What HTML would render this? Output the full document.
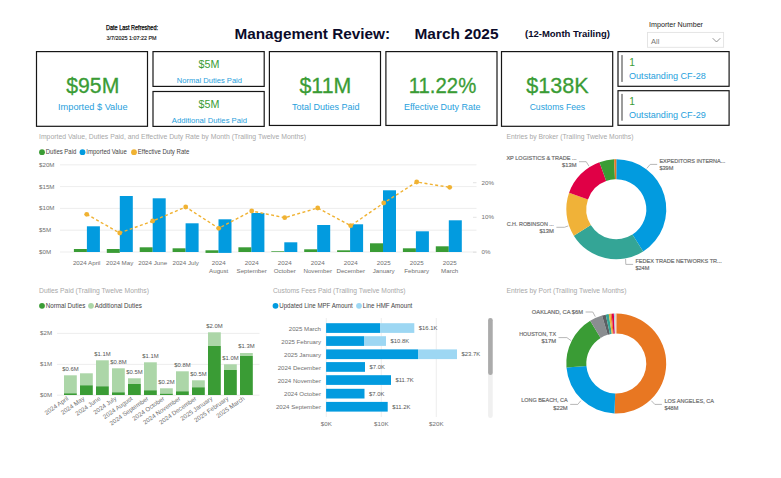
<!DOCTYPE html>
<html><head><meta charset="utf-8"><title>Management Review</title>
<style>html,body{margin:0;padding:0;background:#fff}svg{display:block;font-family:"Liberation Sans", sans-serif}</style>
</head><body>
<svg width="781" height="478" viewBox="0 0 781 478">
<text x="132" y="30" font-size="7" fill="#000" text-anchor="middle" textLength="52" lengthAdjust="spacingAndGlyphs" stroke="#000" stroke-width="0.25">Date Last Refreshed:</text>
<text x="131.6" y="40.1" font-size="6.2" fill="#111" text-anchor="middle" textLength="50" lengthAdjust="spacingAndGlyphs" stroke="#111" stroke-width="0.15">3/7/2025 1:07:22 PM</text>
<text x="234.5" y="38.8" font-size="14.7" fill="#0b0b2a" font-weight="bold" textLength="155.5" lengthAdjust="spacingAndGlyphs">Management Review:</text>
<text x="414.5" y="38.8" font-size="14.7" fill="#0b0b2a" font-weight="bold" textLength="84" lengthAdjust="spacingAndGlyphs">March 2025</text>
<text x="525" y="37" font-size="9.2" fill="#0b0b2a" font-weight="bold" textLength="85" lengthAdjust="spacingAndGlyphs">(12-Month Trailing)</text>
<text x="649" y="26.9" font-size="7.2" fill="#222" textLength="54" lengthAdjust="spacingAndGlyphs">Importer Number</text>
<rect x="647.5" y="32.4" width="76.1" height="14.9" fill="#fff" stroke="#e2e2e2" stroke-width="0.9"/>
<text x="651" y="44" font-size="7.6" fill="#777">All</text>
<path d="M712.7 38.2 L716.5 42 L720.3 38.2" fill="none" stroke="#777" stroke-width="0.8"/>
<rect x="36.5" y="51.6" width="111.00" height="74.70" fill="#fff" stroke="#161616" stroke-width="1.2"/>
<text x="92.8" y="93" font-size="22.6" fill="#3a9c35" text-anchor="middle" textLength="53" lengthAdjust="spacingAndGlyphs" stroke="#3a9c35" stroke-width="0.3">$95M</text>
<text x="92.8" y="110" font-size="9.3" fill="#27a0dc" text-anchor="middle" textLength="69.5" lengthAdjust="spacingAndGlyphs">Imported $ Value</text>
<rect x="153" y="51.6" width="111.20" height="34.80" fill="#fff" stroke="#161616" stroke-width="1.2"/>
<text x="209" y="67.5" font-size="11" fill="#3a9c35" text-anchor="middle" textLength="20.8" lengthAdjust="spacingAndGlyphs">$5M</text>
<text x="209.4" y="82.5" font-size="8" fill="#27a0dc" text-anchor="middle" textLength="65.2" lengthAdjust="spacingAndGlyphs">Normal Duties Paid</text>
<rect x="153" y="91.5" width="111.20" height="34.90" fill="#fff" stroke="#161616" stroke-width="1.2"/>
<text x="209" y="108" font-size="11" fill="#3a9c35" text-anchor="middle" textLength="20.8" lengthAdjust="spacingAndGlyphs">$5M</text>
<text x="209.4" y="122.5" font-size="8" fill="#27a0dc" text-anchor="middle" textLength="75.2" lengthAdjust="spacingAndGlyphs">Additional Duties Paid</text>
<rect x="269.4" y="51.6" width="111.10" height="73.85" fill="#fff" stroke="#161616" stroke-width="1.2"/>
<text x="325.4" y="93" font-size="22.6" fill="#3a9c35" text-anchor="middle" textLength="51.8" lengthAdjust="spacingAndGlyphs" stroke="#3a9c35" stroke-width="0.3">$11M</text>
<text x="325.8" y="110" font-size="9.3" fill="#27a0dc" text-anchor="middle" textLength="67.5" lengthAdjust="spacingAndGlyphs">Total Duties Paid</text>
<rect x="385.9" y="51.6" width="111.10" height="73.85" fill="#fff" stroke="#161616" stroke-width="1.2"/>
<text x="442.5" y="93" font-size="22.6" fill="#3a9c35" text-anchor="middle" textLength="67.5" lengthAdjust="spacingAndGlyphs" stroke="#3a9c35" stroke-width="0.3">11.22%</text>
<text x="442.2" y="110" font-size="9.3" fill="#27a0dc" text-anchor="middle" textLength="76.5" lengthAdjust="spacingAndGlyphs">Effective Duty Rate</text>
<rect x="501.5" y="51.6" width="111.20" height="74.70" fill="#fff" stroke="#161616" stroke-width="1.2"/>
<text x="557.4" y="93" font-size="22.6" fill="#3a9c35" text-anchor="middle" textLength="62.5" lengthAdjust="spacingAndGlyphs" stroke="#3a9c35" stroke-width="0.3">$138K</text>
<text x="557.4" y="110" font-size="9.3" fill="#27a0dc" text-anchor="middle" textLength="55.5" lengthAdjust="spacingAndGlyphs">Customs Fees</text>
<rect x="618" y="51.6" width="111.10" height="34.70" fill="#fff" stroke="#161616" stroke-width="1.2"/>
<rect x="621.00" y="55.10" width="2.00" height="26.80" fill="#9c9c9c"/>
<text x="629.2" y="65.6" font-size="10.2" fill="#3a9c35">1</text>
<text x="629" y="78.8" font-size="9.3" fill="#27a0dc" textLength="76.8" lengthAdjust="spacingAndGlyphs">Outstanding CF-28</text>
<rect x="618" y="90.7" width="111.10" height="34.60" fill="#fff" stroke="#161616" stroke-width="1.2"/>
<rect x="621.00" y="93.90" width="2.00" height="26.80" fill="#9c9c9c"/>
<text x="629.2" y="104.6" font-size="10.2" fill="#3a9c35">1</text>
<text x="629" y="117.6" font-size="9.3" fill="#27a0dc" textLength="76.8" lengthAdjust="spacingAndGlyphs">Outstanding CF-29</text>
<text x="39" y="139.4" font-size="6.6" fill="#a8a8a8" textLength="267" lengthAdjust="spacingAndGlyphs">Imported Value, Duties Paid, and Effective Duty Rate by Month (Trailing Twelve Months)</text>
<circle cx="42" cy="152.20000000000002" r="2.9" fill="#3a9c35"/>
<text x="45.8" y="154.4" font-size="6.5" fill="#444" textLength="30.5" lengthAdjust="spacingAndGlyphs">Duties Paid</text>
<circle cx="82.5" cy="152.20000000000002" r="2.9" fill="#029bdf"/>
<text x="86.3" y="154.4" font-size="6.5" fill="#444" textLength="40.5" lengthAdjust="spacingAndGlyphs">Imported Value</text>
<circle cx="134" cy="152.20000000000002" r="2.9" fill="#f0b232"/>
<text x="137.8" y="154.4" font-size="6.5" fill="#444" textLength="51.5" lengthAdjust="spacingAndGlyphs">Effective Duty Rate</text>
<line x1="60" x2="476.5" y1="164.8" y2="164.8" stroke="#e9e9e9" stroke-width="0.8"/>
<text x="39" y="166.8" font-size="6.2" fill="#707070">$20M</text>
<line x1="60" x2="476.5" y1="186.6" y2="186.6" stroke="#e9e9e9" stroke-width="0.8"/>
<text x="39" y="188.6" font-size="6.2" fill="#707070">$15M</text>
<line x1="60" x2="476.5" y1="208.4" y2="208.4" stroke="#e9e9e9" stroke-width="0.8"/>
<text x="39" y="210.4" font-size="6.2" fill="#707070">$10M</text>
<line x1="60" x2="476.5" y1="230.2" y2="230.2" stroke="#e9e9e9" stroke-width="0.8"/>
<text x="39" y="232.2" font-size="6.2" fill="#707070">$5M</text>
<line x1="60" x2="476.5" y1="252.0" y2="252.0" stroke="#e9e9e9" stroke-width="0.8"/>
<text x="39" y="254.0" font-size="6.2" fill="#707070">$0M</text>
<text x="481.5" y="184.7" font-size="6.2" fill="#707070">20%</text>
<line x1="473" x2="476.5" y1="182.7" y2="182.7" stroke="#d0d0d0" stroke-width="0.6"/>
<text x="481.5" y="219.3" font-size="6.2" fill="#707070">10%</text>
<line x1="473" x2="476.5" y1="217.3" y2="217.3" stroke="#d0d0d0" stroke-width="0.6"/>
<text x="481.5" y="254.2" font-size="6.2" fill="#707070">0%</text>
<line x1="473" x2="476.5" y1="252.2" y2="252.2" stroke="#d0d0d0" stroke-width="0.6"/>
<rect x="73.90" y="249.00" width="13.00" height="3.00" fill="#3a9c35"/>
<rect x="86.90" y="226.30" width="13.00" height="25.70" fill="#029bdf"/>
<rect x="106.80" y="249.00" width="13.00" height="3.90" fill="#3a9c35"/>
<rect x="119.80" y="196.00" width="13.00" height="56.00" fill="#029bdf"/>
<rect x="139.70" y="247.30" width="13.00" height="4.70" fill="#3a9c35"/>
<rect x="152.70" y="198.30" width="13.00" height="53.70" fill="#029bdf"/>
<rect x="172.60" y="248.30" width="13.00" height="3.70" fill="#3a9c35"/>
<rect x="185.60" y="223.30" width="13.00" height="28.70" fill="#029bdf"/>
<rect x="205.50" y="250.30" width="13.00" height="2.60" fill="#3a9c35"/>
<rect x="218.50" y="219.30" width="13.00" height="33.60" fill="#029bdf"/>
<rect x="238.40" y="247.30" width="13.00" height="4.70" fill="#3a9c35"/>
<rect x="251.40" y="213.00" width="13.00" height="39.00" fill="#029bdf"/>
<rect x="271.30" y="251.30" width="13.00" height="0.70" fill="#3a9c35"/>
<rect x="284.30" y="242.30" width="13.00" height="9.70" fill="#029bdf"/>
<rect x="304.20" y="249.30" width="13.00" height="2.70" fill="#3a9c35"/>
<rect x="317.20" y="225.00" width="13.00" height="27.00" fill="#029bdf"/>
<rect x="337.10" y="250.30" width="13.00" height="1.70" fill="#3a9c35"/>
<rect x="350.10" y="224.30" width="13.00" height="27.70" fill="#029bdf"/>
<rect x="370.00" y="243.30" width="13.00" height="8.70" fill="#3a9c35"/>
<rect x="383.00" y="190.30" width="13.00" height="61.70" fill="#029bdf"/>
<rect x="402.90" y="248.30" width="13.00" height="3.70" fill="#3a9c35"/>
<rect x="415.90" y="231.30" width="13.00" height="20.70" fill="#029bdf"/>
<rect x="435.80" y="246.30" width="13.00" height="5.70" fill="#3a9c35"/>
<rect x="448.80" y="220.30" width="13.00" height="31.70" fill="#029bdf"/>
<polyline points="86.7,214.3 119.7,233.0 152.7,221.0 185.7,207.0 218.7,228.3 251.7,211.0 284.7,217.7 317.7,208.0 350.7,225.7 383.7,203.0 416.7,182.0 449.7,187.3" fill="none" stroke="#f0b232" stroke-width="1.4" stroke-dasharray="3,2.4"/>
<circle cx="86.7" cy="214.3" r="2.4" fill="#f0b232"/>
<circle cx="119.7" cy="233.0" r="2.4" fill="#f0b232"/>
<circle cx="152.7" cy="221.0" r="2.4" fill="#f0b232"/>
<circle cx="185.7" cy="207.0" r="2.4" fill="#f0b232"/>
<circle cx="218.7" cy="228.3" r="2.4" fill="#f0b232"/>
<circle cx="251.7" cy="211.0" r="2.4" fill="#f0b232"/>
<circle cx="284.7" cy="217.7" r="2.4" fill="#f0b232"/>
<circle cx="317.7" cy="208.0" r="2.4" fill="#f0b232"/>
<circle cx="350.7" cy="225.7" r="2.4" fill="#f0b232"/>
<circle cx="383.7" cy="203.0" r="2.4" fill="#f0b232"/>
<circle cx="416.7" cy="182.0" r="2.4" fill="#f0b232"/>
<circle cx="449.7" cy="187.3" r="2.4" fill="#f0b232"/>
<text x="86.7" y="264.8" font-size="6.2" fill="#707070" text-anchor="middle">2024 April</text>
<text x="119.7" y="264.8" font-size="6.2" fill="#707070" text-anchor="middle">2024 May</text>
<text x="152.7" y="264.8" font-size="6.2" fill="#707070" text-anchor="middle">2024 June</text>
<text x="185.7" y="264.8" font-size="6.2" fill="#707070" text-anchor="middle">2024 July</text>
<text x="218.7" y="264.8" font-size="6.2" fill="#707070" text-anchor="middle">2024</text>
<text x="218.7" y="273" font-size="6.2" fill="#707070" text-anchor="middle">August</text>
<text x="251.7" y="264.8" font-size="6.2" fill="#707070" text-anchor="middle">2024</text>
<text x="251.7" y="273" font-size="6.2" fill="#707070" text-anchor="middle">September</text>
<text x="284.7" y="264.8" font-size="6.2" fill="#707070" text-anchor="middle">2024</text>
<text x="284.7" y="273" font-size="6.2" fill="#707070" text-anchor="middle">October</text>
<text x="317.7" y="264.8" font-size="6.2" fill="#707070" text-anchor="middle">2024</text>
<text x="317.7" y="273" font-size="6.2" fill="#707070" text-anchor="middle">November</text>
<text x="350.7" y="264.8" font-size="6.2" fill="#707070" text-anchor="middle">2024</text>
<text x="350.7" y="273" font-size="6.2" fill="#707070" text-anchor="middle">December</text>
<text x="383.7" y="264.8" font-size="6.2" fill="#707070" text-anchor="middle">2025</text>
<text x="383.7" y="273" font-size="6.2" fill="#707070" text-anchor="middle">January</text>
<text x="416.7" y="264.8" font-size="6.2" fill="#707070" text-anchor="middle">2025</text>
<text x="416.7" y="273" font-size="6.2" fill="#707070" text-anchor="middle">February</text>
<text x="449.7" y="264.8" font-size="6.2" fill="#707070" text-anchor="middle">2025</text>
<text x="449.7" y="273" font-size="6.2" fill="#707070" text-anchor="middle">March</text>
<text x="39" y="293.3" font-size="6.6" fill="#a8a8a8" textLength="110" lengthAdjust="spacingAndGlyphs">Duties Paid (Trailing Twelve Months)</text>
<circle cx="42" cy="305.8" r="2.9" fill="#3a9c35"/>
<text x="45.8" y="308" font-size="6.5" fill="#444" textLength="39.5" lengthAdjust="spacingAndGlyphs">Normal Duties</text>
<circle cx="91" cy="305.8" r="2.9" fill="#acd6a8"/>
<text x="94.8" y="308" font-size="6.5" fill="#444" textLength="47" lengthAdjust="spacingAndGlyphs">Additional Duties</text>
<line x1="57" x2="259.5" y1="333.4" y2="333.4" stroke="#e9e9e9" stroke-width="0.8"/>
<text x="40" y="335.4" font-size="6.2" fill="#707070">$2M</text>
<line x1="57" x2="259.5" y1="364.4" y2="364.4" stroke="#e9e9e9" stroke-width="0.8"/>
<text x="40" y="366.4" font-size="6.2" fill="#707070">$1M</text>
<line x1="57" x2="259.5" y1="395.2" y2="395.2" stroke="#e9e9e9" stroke-width="0.8"/>
<text x="40" y="397.2" font-size="6.2" fill="#707070">$0M</text>
<rect x="64.00" y="375.30" width="12.80" height="18.00" fill="#acd6a8"/>
<rect x="64.00" y="393.30" width="12.80" height="1.70" fill="#3a9c35"/>
<text x="70.4" y="371.3" font-size="5.9" fill="#555" text-anchor="middle">$0.6M</text>
<text x="69.0" y="399.5" font-size="6.2" fill="#707070" text-anchor="end" transform="rotate(-35 69.0 399.5)">2024 April</text>
<rect x="80.00" y="373.30" width="12.80" height="12.00" fill="#acd6a8"/>
<rect x="80.00" y="385.30" width="12.80" height="9.70" fill="#3a9c35"/>
<text x="85.0" y="399.5" font-size="6.2" fill="#707070" text-anchor="end" transform="rotate(-35 85.0 399.5)">2024 May</text>
<rect x="96.00" y="360.30" width="12.80" height="26.00" fill="#acd6a8"/>
<rect x="96.00" y="386.30" width="12.80" height="8.70" fill="#3a9c35"/>
<text x="102.4" y="356.3" font-size="5.9" fill="#555" text-anchor="middle">$1.1M</text>
<text x="101.0" y="399.5" font-size="6.2" fill="#707070" text-anchor="end" transform="rotate(-35 101.0 399.5)">2024 June</text>
<rect x="112.00" y="368.30" width="12.80" height="24.00" fill="#acd6a8"/>
<rect x="112.00" y="392.30" width="12.80" height="2.70" fill="#3a9c35"/>
<text x="118.4" y="364.3" font-size="5.9" fill="#555" text-anchor="middle">$0.8M</text>
<text x="117.0" y="399.5" font-size="6.2" fill="#707070" text-anchor="end" transform="rotate(-35 117.0 399.5)">2024 July</text>
<rect x="128.00" y="378.30" width="12.80" height="5.70" fill="#acd6a8"/>
<rect x="128.00" y="384.00" width="12.80" height="11.00" fill="#3a9c35"/>
<text x="134.4" y="374.3" font-size="5.9" fill="#555" text-anchor="middle">$0.5M</text>
<text x="133.0" y="399.5" font-size="6.2" fill="#707070" text-anchor="end" transform="rotate(-35 133.0 399.5)">2024 August</text>
<rect x="144.00" y="362.30" width="12.80" height="28.00" fill="#acd6a8"/>
<rect x="144.00" y="390.30" width="12.80" height="4.70" fill="#3a9c35"/>
<text x="150.4" y="358.3" font-size="5.9" fill="#555" text-anchor="middle">$1.1M</text>
<text x="149.0" y="399.5" font-size="6.2" fill="#707070" text-anchor="end" transform="rotate(-35 149.0 399.5)">2024 September</text>
<rect x="160.00" y="388.30" width="12.80" height="5.40" fill="#acd6a8"/>
<rect x="160.00" y="393.70" width="12.80" height="1.30" fill="#3a9c35"/>
<text x="166.4" y="384.3" font-size="5.9" fill="#555" text-anchor="middle">$0.2M</text>
<text x="165.0" y="399.5" font-size="6.2" fill="#707070" text-anchor="end" transform="rotate(-35 165.0 399.5)">2024 October</text>
<rect x="176.00" y="371.30" width="12.80" height="20.00" fill="#acd6a8"/>
<rect x="176.00" y="391.30" width="12.80" height="3.70" fill="#3a9c35"/>
<text x="182.4" y="367.3" font-size="5.9" fill="#555" text-anchor="middle">$0.8M</text>
<text x="181.0" y="399.5" font-size="6.2" fill="#707070" text-anchor="end" transform="rotate(-35 181.0 399.5)">2024 November</text>
<rect x="192.00" y="380.30" width="12.80" height="7.00" fill="#acd6a8"/>
<rect x="192.00" y="387.30" width="12.80" height="7.70" fill="#3a9c35"/>
<text x="198.4" y="376.3" font-size="5.9" fill="#555" text-anchor="middle">$0.5M</text>
<text x="197.0" y="399.5" font-size="6.2" fill="#707070" text-anchor="end" transform="rotate(-35 197.0 399.5)">2024 December</text>
<rect x="208.00" y="332.30" width="12.80" height="13.70" fill="#acd6a8"/>
<rect x="208.00" y="346.00" width="12.80" height="49.00" fill="#3a9c35"/>
<text x="214.4" y="328.3" font-size="5.9" fill="#555" text-anchor="middle">$2.0M</text>
<text x="213.0" y="399.5" font-size="6.2" fill="#707070" text-anchor="end" transform="rotate(-35 213.0 399.5)">2025 January</text>
<rect x="224.00" y="364.30" width="12.80" height="5.70" fill="#acd6a8"/>
<rect x="224.00" y="370.00" width="12.80" height="25.00" fill="#3a9c35"/>
<text x="230.4" y="360.3" font-size="5.9" fill="#555" text-anchor="middle">$1.0M</text>
<text x="229.0" y="399.5" font-size="6.2" fill="#707070" text-anchor="end" transform="rotate(-35 229.0 399.5)">2025 February</text>
<rect x="240.00" y="353.00" width="12.80" height="3.00" fill="#acd6a8"/>
<rect x="240.00" y="356.00" width="12.80" height="39.00" fill="#3a9c35"/>
<text x="246.4" y="347.8" font-size="5.9" fill="#555" text-anchor="middle">$1.3M</text>
<text x="245.0" y="399.5" font-size="6.2" fill="#707070" text-anchor="end" transform="rotate(-35 245.0 399.5)">2025 March</text>
<text x="273" y="293.3" font-size="6.6" fill="#a8a8a8" textLength="132.5" lengthAdjust="spacingAndGlyphs">Customs Fees Paid (Trailing Twelve Months)</text>
<circle cx="275.5" cy="305.8" r="2.9" fill="#029bdf"/>
<text x="279.3" y="308" font-size="6.5" fill="#444" textLength="73.5" lengthAdjust="spacingAndGlyphs">Updated Line MPF Amount</text>
<circle cx="359.0" cy="305.8" r="2.9" fill="#9dd7f3"/>
<text x="362.8" y="308" font-size="6.5" fill="#444" textLength="49.5" lengthAdjust="spacingAndGlyphs">Line HMF Amount</text>
<line x1="326.3" x2="326.3" y1="318" y2="417" stroke="#e9e9e9" stroke-width="0.8"/>
<text x="326.3" y="426" font-size="6.2" fill="#707070" text-anchor="middle">$0K</text>
<line x1="381.3" x2="381.3" y1="318" y2="417" stroke="#e9e9e9" stroke-width="0.8"/>
<text x="381.3" y="426" font-size="6.2" fill="#707070" text-anchor="middle">$10K</text>
<line x1="436.3" x2="436.3" y1="318" y2="417" stroke="#e9e9e9" stroke-width="0.8"/>
<text x="436.3" y="426" font-size="6.2" fill="#707070" text-anchor="middle">$20K</text>
<rect x="326.10" y="323.20" width="53.90" height="9.70" fill="#029bdf"/>
<rect x="380.00" y="323.20" width="34.30" height="9.70" fill="#9dd7f3"/>
<text x="321" y="330.6" font-size="6.1" fill="#707070" text-anchor="end">2025 March</text>
<text x="418.8" y="330.2" font-size="5.9" fill="#555">$16.1K</text>
<rect x="326.10" y="336.20" width="37.90" height="9.70" fill="#029bdf"/>
<rect x="364.00" y="336.20" width="22.00" height="9.70" fill="#9dd7f3"/>
<text x="321" y="343.6" font-size="6.1" fill="#707070" text-anchor="end">2025 February</text>
<text x="390.5" y="343.2" font-size="5.9" fill="#555">$10.8K</text>
<rect x="326.10" y="349.40" width="91.90" height="9.70" fill="#029bdf"/>
<rect x="418.00" y="349.40" width="39.00" height="9.70" fill="#9dd7f3"/>
<text x="321" y="356.8" font-size="6.1" fill="#707070" text-anchor="end">2025 January</text>
<text x="461.5" y="356.4" font-size="5.9" fill="#555">$23.7K</text>
<rect x="326.10" y="362.10" width="38.90" height="9.70" fill="#029bdf"/>
<text x="321" y="369.5" font-size="6.1" fill="#707070" text-anchor="end">2024 December</text>
<text x="369.5" y="369.1" font-size="5.9" fill="#555">$7.0K</text>
<rect x="326.10" y="375.20" width="64.90" height="9.70" fill="#029bdf"/>
<text x="321" y="382.6" font-size="6.1" fill="#707070" text-anchor="end">2024 November</text>
<text x="395.5" y="382.2" font-size="5.9" fill="#555">$11.7K</text>
<rect x="326.10" y="388.80" width="38.40" height="9.70" fill="#029bdf"/>
<text x="321" y="396.2" font-size="6.1" fill="#707070" text-anchor="end">2024 October</text>
<text x="369.0" y="395.8" font-size="5.9" fill="#555">$7.0K</text>
<rect x="326.10" y="401.90" width="61.60" height="9.70" fill="#029bdf"/>
<text x="321" y="409.3" font-size="6.1" fill="#707070" text-anchor="end">2024 September</text>
<text x="392.2" y="408.9" font-size="5.9" fill="#555">$11.2K</text>
<rect x="488.10" y="318.00" width="4.60" height="100.00" fill="#f0f0f0" rx="2.3"/>
<rect x="488.10" y="318.00" width="4.60" height="57.00" fill="#ababab" rx="2.3"/>
<text x="506.5" y="139.4" font-size="6.6" fill="#a8a8a8" textLength="127" lengthAdjust="spacingAndGlyphs">Entries by Broker (Trailing Twelve Months)</text>
<path d="M616.30 159.30 A50 50 0 0 1 643.16 251.47 L632.42 234.60 A30 30 0 0 0 616.30 179.30 Z" fill="#029bdf"/>
<path d="M643.16 251.47 A50 50 0 0 1 573.81 235.65 L590.80 225.11 A30 30 0 0 0 632.42 234.60 Z" fill="#34a596"/>
<path d="M573.81 235.65 A50 50 0 0 1 569.08 192.86 L587.97 199.43 A30 30 0 0 0 590.80 225.11 Z" fill="#f0b238"/>
<path d="M569.08 192.86 A50 50 0 0 1 599.45 162.23 L606.19 181.06 A30 30 0 0 0 587.97 199.43 Z" fill="#e00046"/>
<path d="M599.45 162.23 A50 50 0 0 1 614.12 159.35 L614.99 179.33 A30 30 0 0 0 606.19 181.06 Z" fill="#3a9c35"/>
<path d="M614.12 159.35 A50 50 0 0 1 616.30 159.30 L616.30 179.30 A30 30 0 0 0 614.99 179.33 Z" fill="#e87722"/>
<text x="506.4" y="159.7" font-size="6.1" fill="#6a6a6a" textLength="70.2" lengthAdjust="spacingAndGlyphs" stroke="#6a6a6a" stroke-width="0.18">XP LOGISTICS &amp; TRADE ...</text>
<text x="576.6" y="166.8" font-size="6.1" fill="#6a6a6a" text-anchor="end" textLength="14.5" lengthAdjust="spacingAndGlyphs" stroke="#6a6a6a" stroke-width="0.18">$13M</text>
<path d="M579 161.7 L586.2 161.7 L589 166.2" fill="none" stroke="#9a9a9a" stroke-width="0.7"/>
<text x="506.7" y="225.8" font-size="6.1" fill="#6a6a6a" textLength="47.2" lengthAdjust="spacingAndGlyphs" stroke="#6a6a6a" stroke-width="0.18">C.H. ROBINSON ...</text>
<text x="553.9" y="232.7" font-size="6.1" fill="#6a6a6a" text-anchor="end" textLength="14.5" lengthAdjust="spacingAndGlyphs" stroke="#6a6a6a" stroke-width="0.18">$13M</text>
<path d="M556.4 227.3 L564.4 227.3 L568.3 225.9" fill="none" stroke="#9a9a9a" stroke-width="0.7"/>
<text x="659.4" y="162.7" font-size="6.1" fill="#6a6a6a" textLength="66" lengthAdjust="spacingAndGlyphs" stroke="#6a6a6a" stroke-width="0.18">EXPEDITORS INTERNA...</text>
<text x="659.4" y="169.8" font-size="6.1" fill="#6a6a6a" textLength="14" lengthAdjust="spacingAndGlyphs" stroke="#6a6a6a" stroke-width="0.18">$39M</text>
<path d="M657.2 164.4 L650.2 164.4 L646.8 168.4" fill="none" stroke="#9a9a9a" stroke-width="0.7"/>
<text x="635.4" y="262.7" font-size="6.1" fill="#6a6a6a" textLength="86.4" lengthAdjust="spacingAndGlyphs" stroke="#6a6a6a" stroke-width="0.18">FEDEX TRADE NETWORKS TR...</text>
<text x="635.4" y="269.8" font-size="6.1" fill="#6a6a6a" textLength="14" lengthAdjust="spacingAndGlyphs" stroke="#6a6a6a" stroke-width="0.18">$24M</text>
<path d="M633.1 264.4 L625.8 264.4 L625.6 259" fill="none" stroke="#9a9a9a" stroke-width="0.7"/>
<text x="506.5" y="293.3" font-size="6.6" fill="#a8a8a8" textLength="120" lengthAdjust="spacingAndGlyphs">Entries by Port (Trailing Twelve Months)</text>
<path d="M616.30 313.50 A50 50 0 1 1 614.47 413.47 L615.20 393.48 A30 30 0 1 0 616.30 333.50 Z" fill="#e87722"/>
<path d="M614.47 413.47 A50 50 0 0 1 566.46 367.51 L586.40 365.91 A30 30 0 0 0 615.20 393.48 Z" fill="#029bdf"/>
<path d="M566.46 367.51 A50 50 0 0 1 590.18 320.87 L600.63 337.92 A30 30 0 0 0 586.40 365.91 Z" fill="#3a9c35"/>
<path d="M590.18 320.87 A50 50 0 0 1 602.02 315.58 L607.73 334.75 A30 30 0 0 0 600.63 337.92 Z" fill="#8a8d90"/>
<path d="M602.02 315.58 A50 50 0 0 1 605.73 314.63 L609.96 334.18 A30 30 0 0 0 607.73 334.75 Z" fill="#5b5f63"/>
<path d="M605.73 314.63 A50 50 0 0 1 608.74 314.08 L611.76 333.85 A30 30 0 0 0 609.96 334.18 Z" fill="#34a596"/>
<path d="M608.74 314.08 A50 50 0 0 1 610.38 313.85 L612.75 333.71 A30 30 0 0 0 611.76 333.85 Z" fill="#f0b238"/>
<path d="M610.38 313.85 A50 50 0 0 1 611.68 313.71 L613.53 333.63 A30 30 0 0 0 612.75 333.71 Z" fill="#e87722"/>
<path d="M611.68 313.71 A50 50 0 0 1 613.86 313.56 L614.83 333.54 A30 30 0 0 0 613.53 333.63 Z" fill="#e00046"/>
<path d="M613.86 313.56 A50 50 0 0 1 614.90 313.52 L615.46 333.51 A30 30 0 0 0 614.83 333.54 Z" fill="#9fd4ef"/>
<path d="M614.90 313.52 A50 50 0 0 1 616.30 313.50 L616.30 333.50 A30 30 0 0 0 615.46 333.51 Z" fill="#f3d0c8"/>
<text x="531.8" y="313.7" font-size="6.1" fill="#6a6a6a" textLength="51.3" lengthAdjust="spacingAndGlyphs" stroke="#6a6a6a" stroke-width="0.18">OAKLAND, CA $6M</text>
<path d="M585.6 312 L592.8 312 L595.3 316.7" fill="none" stroke="#9a9a9a" stroke-width="0.7"/>
<text x="519.2" y="335.6" font-size="6.1" fill="#6a6a6a" textLength="36.8" lengthAdjust="spacingAndGlyphs" stroke="#6a6a6a" stroke-width="0.18">HOUSTON, TX</text>
<text x="556" y="342.7" font-size="6.1" fill="#6a6a6a" text-anchor="end" textLength="14.5" lengthAdjust="spacingAndGlyphs" stroke="#6a6a6a" stroke-width="0.18">$17M</text>
<path d="M558.5 337.6 L566.9 337.6 L571.1 340.7" fill="none" stroke="#9a9a9a" stroke-width="0.7"/>
<text x="521.2" y="402.4" font-size="6.1" fill="#6a6a6a" textLength="46.5" lengthAdjust="spacingAndGlyphs" stroke="#6a6a6a" stroke-width="0.18">LONG BEACH, CA</text>
<text x="567.7" y="409.6" font-size="6.1" fill="#6a6a6a" text-anchor="end" textLength="14.5" lengthAdjust="spacingAndGlyphs" stroke="#6a6a6a" stroke-width="0.18">$22M</text>
<path d="M570.2 404.4 L577.8 404.4 L580.8 400.7" fill="none" stroke="#9a9a9a" stroke-width="0.7"/>
<text x="664.4" y="402.5" font-size="6.1" fill="#6a6a6a" textLength="49.6" lengthAdjust="spacingAndGlyphs" stroke="#6a6a6a" stroke-width="0.18">LOS ANGELES, CA</text>
<text x="664.4" y="409.6" font-size="6.1" fill="#6a6a6a" textLength="14" lengthAdjust="spacingAndGlyphs" stroke="#6a6a6a" stroke-width="0.18">$48M</text>
<path d="M661.9 404.4 L654.8 404.4 L651.3 400.7" fill="none" stroke="#9a9a9a" stroke-width="0.7"/>
</svg>
</body></html>
